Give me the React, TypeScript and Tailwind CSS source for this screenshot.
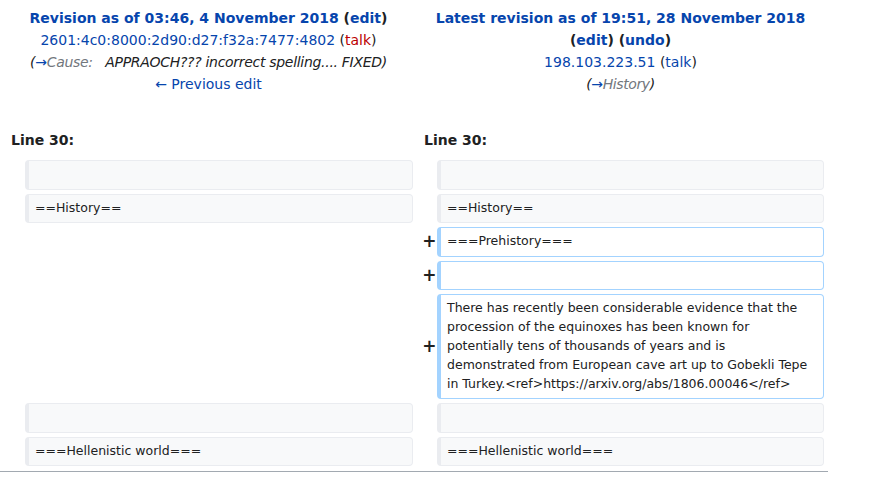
import React from 'react'

const font = { fontFamily: '"DejaVu Sans", sans-serif' }

type Row = { left?: string | null; right?: string | null; added?: boolean }

const rows: Row[] = [
  { left: '', right: '' },
  { left: '==History==', right: '==History==' },
  { right: '===Prehistory===', added: true },
  { right: '', added: true },
  {
    right:
      'There has recently been considerable evidence that the procession of the equinoxes has been known for potentially tens of thousands of years and is demonstrated from European cave art up to Gobekli Tepe in Turkey.<ref>https://arxiv.org/abs/1806.00046</ref>',
    added: true,
  },
  { left: '', right: '' },
  { left: '===Hellenistic world===', right: '===Hellenistic world===' },
]

function Cell({ text, added }: { text: string; added?: boolean }) {
  return (
    <div
      className={
        'rounded-[4px] border border-l-4 pl-[6px] pr-[10px] py-[4.3px] text-[12.5px] leading-[18.9px] text-[#202122] break-words ' +
        (added ? 'border-[#a3d3ff] bg-white' : 'border-[#eaecf0] bg-[#f8f9fa]')
      }
    >
      {text || '\u00a0'}
    </div>
  )
}

export default function App() {
  return (
    <div className="w-[874px] h-[488px] bg-white text-[#202122]" style={font}>
      <div className="w-[828px] pt-[7px]">
        <div className="px-1 grid grid-cols-[409px_407px] gap-x-1 text-[14px] leading-[22px] text-center">
          <div>
            <div className="font-bold">
              <span className="text-[#0645ad]">Revision as of 03:46, 4 November 2018</span> (
              <span className="text-[#0645ad]">edit</span>)
            </div>
            <div>
              <span className="text-[#0645ad]">2601:4c0:8000:2d90:d27:f32a:7477:4802</span> (
              <span className="text-[#ba0000]">talk</span>)
            </div>
            <div className="italic tracking-[-0.3px]">
              (<span className="text-[#0645ad]">→</span>
              <span className="text-[#72777d]">Cause:</span>
              {'\u00a0\u00a0 '}APPRAOCH??? incorrect spelling.... FIXED)
            </div>
            <div className="text-[#0645ad]">← Previous edit</div>
          </div>
          <div>
            <div className="font-bold">
              <span className="text-[#0645ad]">Latest revision as of 19:51, 28 November 2018</span>
            </div>
            <div className="font-bold">
              (<span className="text-[#0645ad]">edit</span>) (<span className="text-[#0645ad]">undo</span>)
            </div>
            <div>
              <span className="text-[#0645ad]">198.103.223.51</span> (<span className="text-[#0645ad]">talk</span>)
            </div>
            <div className="italic tracking-[-0.4px]">
              (<span className="text-[#0645ad]">→</span>
              <span className="text-[#72777d]">History</span>)
            </div>
          </div>
        </div>

        <div className="px-1 mt-[34px] grid grid-cols-[409px_407px] gap-x-1 text-[14px] leading-[22px] font-bold">
          <div className="pl-[7px]">Line 30:</div>
          <div className="pl-[7px]">Line 30:</div>
        </div>

        <div className="px-1 mt-[9px] grid grid-cols-[17px_388px_16px_387px] gap-x-1 gap-y-1">
          {rows.map((r, i) => (
            <React.Fragment key={i}>
              <div />
              {r.left != null ? <Cell text={r.left} /> : <div />}
              <div className="flex items-center justify-end mr-[-3.5px] text-[17px] font-bold leading-none">
                {r.added ? '+' : ''}
              </div>
              {r.right != null ? <Cell text={r.right} added={r.added} /> : <div />}
            </React.Fragment>
          ))}
        </div>
        <div className="mt-[5px] border-t border-[#a2a9b1]" />
      </div>
    </div>
  )
}
